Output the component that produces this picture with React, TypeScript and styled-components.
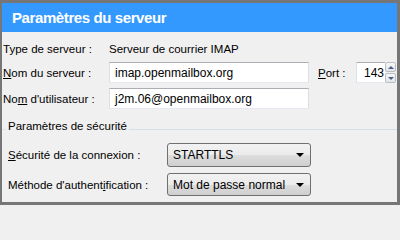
import styled, { createGlobalStyle } from "styled-components";

const GlobalStyle = createGlobalStyle`
  html, body {
    margin: 0;
    padding: 0;
    background: #f0f0f0;
  }
  * {
    box-sizing: border-box;
  }
`;

const App = () => {
  return (
    <>
      <GlobalStyle />
      <Frame>
        <Header>Paramètres du serveur</Header>
        <Content>
          <ServerGrid>
            <Label>Type de serveur :</Label>
            <Value>Serveur de courrier IMAP</Value>
            <span />
            <span />
            <span />

            <Label>
              <Key>N</Key>om du serveur :
            </Label>
            <TextBox>imap.openmailbox.org</TextBox>
            <span />
            <Label>
              <Key>P</Key>ort :
            </Label>
            <PortField>
              <PortBox>143</PortBox>
              <Spinner>
                <SpinButton>
                  <SpinArrow $up />
                </SpinButton>
                <SpinButton>
                  <SpinArrow />
                </SpinButton>
              </Spinner>
            </PortField>

            <Label>
              No<Key>m</Key> d'utilisateur :
            </Label>
            <TextBox>j2m.06@openmailbox.org</TextBox>
          </ServerGrid>

          <Group>
            <GroupHeader>
              <GroupTitle>Paramètres de sécurité</GroupTitle>
            </GroupHeader>
            <SecurityGrid>
              <Label>
                <Key>S</Key>écurité de la connexion :
              </Label>
              <Select $height={24}>
                STARTTLS
                <Caret />
              </Select>
              <Label>
                Méthode d'authent<Key>i</Key>fication :
              </Label>
              <Select $height={23}>
                Mot de passe normal
                <Caret />
              </Select>
            </SecurityGrid>
          </Group>
        </Content>
      </Frame>
    </>
  );
};

export default App;

const Frame = styled.div`
  width: 400px;
  height: 205px;
  display: flex;
  flex-direction: column;
  border-style: solid;
  border-color: #767676;
  border-width: 3px 3px 3px 2px;
  background: #f0f0f0;
  font-family: "Segoe UI", "Liberation Sans", Arial, sans-serif;
  font-size: 11.5px;
  color: #000;
`;

const Header = styled.div`
  height: 29px;
  flex: none;
  display: flex;
  align-items: center;
  padding: 0 0 1px 10px;
  background: #3399ff;
  color: #ffffff;
  font-size: 15px;
  font-weight: bold;
  letter-spacing: -0.4px;
`;

const Content = styled.div`
  flex: 1;
  display: flex;
  flex-direction: column;
  padding: 9px 0 0 1px;
`;

const ServerGrid = styled.div`
  display: grid;
  grid-template-columns: 106px 200px 9px 38px 40px;
  grid-template-rows: 16px 21px 21px;
  row-gap: 5px;
  align-items: center;
`;

const Label = styled.span`
  white-space: nowrap;
`;

const Value = styled.span`
  white-space: nowrap;
`;

const Key = styled.span`
  text-decoration: underline;
`;

const TextBox = styled.div`
  height: 21px;
  display: flex;
  align-items: center;
  padding: 0 5px;
  background: #ffffff;
  border: 1px solid #dbdfe6;
  border-top-color: #abadb3;
  border-bottom-color: #e3e9ef;
  font-size: 12px;
  color: #000;
  white-space: nowrap;
  overflow: hidden;
`;

const PortField = styled.div`
  display: flex;
  height: 21px;
`;

const PortBox = styled(TextBox)`
  width: 29px;
  justify-content: flex-end;
  padding: 0 1px 0 0;
  border-right: none;
`;

const Spinner = styled.div`
  width: 11px;
  display: flex;
  flex-direction: column;
  gap: 1px;
`;

const SpinButton = styled.div`
  flex: 1;
  display: flex;
  align-items: center;
  justify-content: center;
  border: 1px solid #b9bdc4;
  border-radius: 2px;
  background: linear-gradient(#f7f7f7, #e2e4e8);
`;

const SpinArrow = styled.div<{ $up?: boolean }>`
  width: 0;
  height: 0;
  border-left: 3px solid transparent;
  border-right: 3px solid transparent;
  ${({ $up }) =>
    $up ? "border-bottom: 3px solid #4a5f87;" : "border-top: 3px solid #4a5f87;"}
`;

const Group = styled.div`
  display: flex;
  flex-direction: column;
  margin-top: 9px;
`;

const GroupHeader = styled.div`
  height: 16px;
  display: flex;
  align-items: center;
  background: linear-gradient(#d5dfe5, #d5dfe5) 0 11px / 100% 1px no-repeat;
`;

const GroupTitle = styled.span`
  margin-left: 3px;
  padding: 0 2px;
  background: #f0f0f0;
  white-space: nowrap;
`;

const SecurityGrid = styled.div`
  display: grid;
  grid-template-columns: 159px 144px;
  row-gap: 6px;
  align-items: center;
  margin-top: 9px;
  padding-left: 5px;
`;

const Select = styled.div<{ $height: number }>`
  height: ${({ $height }) => $height}px;
  display: flex;
  align-items: center;
  justify-content: space-between;
  padding: 0 6px 0 5px;
  border: 1px solid #707070;
  border-radius: 3px;
  background: linear-gradient(#f2f2f2 0%, #ebebeb 50%, #dddddd 51%, #cfcfcf 100%);
  font-size: 12px;
  white-space: nowrap;
`;

const Caret = styled.span`
  width: 0;
  height: 0;
  border-left: 4px solid transparent;
  border-right: 4px solid transparent;
  border-top: 4px solid #000;
`;
